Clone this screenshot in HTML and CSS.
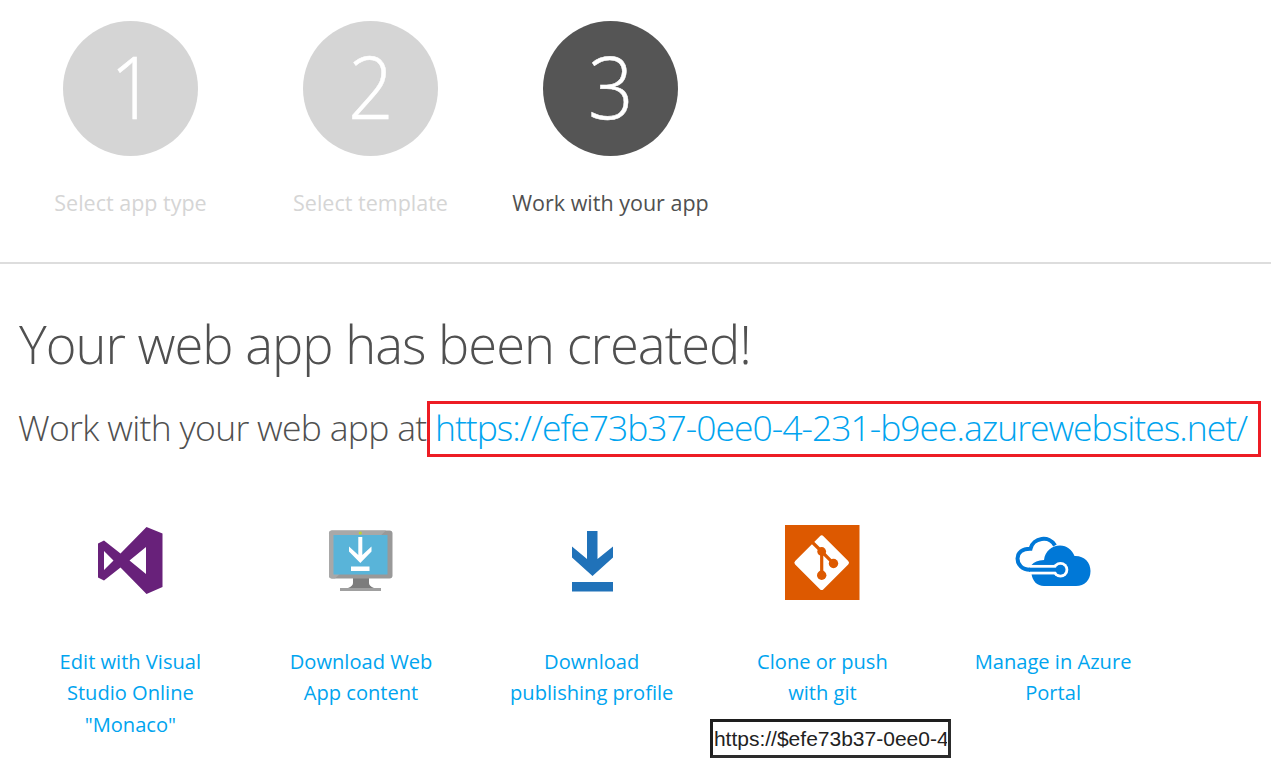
FILE: index.html
```html
<!DOCTYPE html>
<html lang="en">
<head>
<meta charset="utf-8">
<title>Your web app has been created!</title>
<link rel="stylesheet" href="styles.css">
</head>
<body>
<header class="steps">
  <div class="step"><div class="step-number step-one"><span class="digit">1</span></div><div class="step-label">Select app type</div></div>
  <div class="step"><div class="step-number"><span class="digit">2</span></div><div class="step-label">Select template</div></div>
  <div class="step step-active"><div class="step-number"><span class="digit">3</span></div><div class="step-label">Work with your app</div></div>
</header>
<main>
  <h1 class="title">Your web app has been created!</h1>
  <div class="site"><span class="site-intro">Work with your web app at</span><div class="site-box"><a class="site-link">https://efe73b37-0ee0-4-231-b9ee.azurewebsites.net/</a></div></div>
  <section class="actions">
    <div class="action">
      <svg class="icon" viewBox="0 0 100 90"><path fill="#68217a" fill-rule="evenodd" d="M66.5 12 82.500 18.500V72L66.500 79 40.500 52.500 24 65.500 18 62.500V28.500L24 25.500 40.500 38.500ZM66 32 49.500 45.500 66 59ZM24 36V55L33.500 45.500Z"/></svg>
      <div class="action-label">Edit with Visual<br>Studio Online<br>"Monaco"</div>
    </div>
    <div class="action">
      <svg class="icon" viewBox="-4 0 100 90"><path fill="#7c7c7c" d="M38 62H54V68Q54 71 59 73H33Q38 71 38 68Z"/><path fill="#a0a0a0" d="M25 73H66V76H25Z"/><rect x="14" y="15.500" width="63.500" height="48" rx="3" fill="#999"/><path fill="#a8a8a8" d="M17 15.500H71L20 63.500H17Q14 63.500 14 60.500V18.500Q14 15.500 17 15.500Z"/><rect x="18.500" y="20" width="54" height="39.500" fill="#59b4d9"/><circle cx="45.300" cy="18" r="1.600" fill="#b8d432"/><path fill="#fff" d="M43.300 22H47.300V40L56.500 31.500V36.500L45.300 48 34 36.500V31.500L43.300 40ZM36 51.500H54.500V56H36Z"/></svg>
      <div class="action-label">Download Web<br>App content</div>
    </div>
    <div class="action">
      <svg class="icon" viewBox="0 0 100 90"><path fill="#2072b9" d="M45 16H55.500V44L71 31.500V42.500L50.500 61 30 42.500V31.500L45 44ZM30 67H71V76.500H30Z"/></svg>
      <div class="action-label">Download<br>publishing profile</div>
    </div>
    <div class="action">
      <svg class="icon" viewBox="0 0 100 90"><path fill="#dd5900" d="M13 10H87.500V85H13Z"/><rect x="29.700" y="27.700" width="40" height="40" rx="2.500" fill="#fff" transform="rotate(45 49.700 47.700)"/><path fill="none" stroke="#dd5900" stroke-width="3.200" d="M37.500 24.500 49.700 36.500 61.500 48.500M49.700 36V60"/><g fill="#dd5900"><circle cx="49.700" cy="36.500" r="4.400"/><circle cx="61.500" cy="48.500" r="4.700"/><circle cx="49.700" cy="60.300" r="4.700"/></g></svg>
      <div class="action-label">Clone or push<br>with git</div>
      <input class="git-url" type="text" value="https://$efe73b37-0ee0-4231" readonly>
    </div>
    <div class="action">
      <svg class="icon" viewBox="0 0 100 90"><path fill="none" stroke="#0078d7" stroke-width="4" d="M27 54.700C19 54.700 14.500 49.500 14.500 43.500C14.500 37.500 19.500 33.500 27.500 33.700C30 22.500 46.500 20 52 30.500"/><path fill="#0078d7" d="M41 71C34 71 29.500 66 28.500 59V50Q32 45.300 41 45C42 36 49 30.500 57 30.500C64 30.500 69 35 71.500 41C81 40.500 87.500 47 87.500 56C87.500 65 81.500 71 73 71Z"/><path fill="none" stroke="#fff" stroke-width="9.500" d="M27 54.700H55"/><circle cx="57.500" cy="54.700" r="7.800" fill="#fff"/><path fill="none" stroke="#0078d7" stroke-width="4" d="M26 54.700H56"/><circle cx="57.500" cy="54.700" r="5" fill="#0078d7"/></svg>
      <div class="action-label">Manage in Azure<br>Portal</div>
    </div>
  </section>
</main>
</body>
</html>
```
FILE: styles.css
```css
* { box-sizing: border-box; }
body { margin: 0; background: #fff; color: #505050; font-family: "Open Sans", "Noto Sans", sans-serif; height: 778px; overflow: hidden; }
.steps { display: flex; height: 264px; padding: 21px 0 0 10.500px; border-bottom: 2px solid #ddd; }
.step { width: 240px; display: flex; flex-direction: column; align-items: center; color: #d5d5d5; }
.step-number { width: 135px; height: 135px; border-radius: 50%; background: #d5d5d5; color: #fff; font-size: 87px; font-weight: 300; line-height: 129px; text-align: center; }
.step-one { padding-left: 5px; }
.digit { display: inline-block; transform: scaleX(.92); -webkit-text-stroke: .5px #fff; }
.step-label { margin-top: 31px; font-size: 21.500px; line-height: 32px; white-space: nowrap; }
.step-active { color: #505050; }
.step-active .step-number { background: #555; }
.title { margin: 44px 0 0 19px; font-size: 52.500px; font-weight: 300; line-height: 72px; letter-spacing: -1px; white-space: nowrap; }
.site { display: flex; align-items: flex-start; margin: 21px 0 0 18px; height: 56px; font-size: 35.500px; font-weight: 300; line-height: 48px; white-space: nowrap; }
.site-intro { width: 409px; padding-top: 2px; letter-spacing: -.7px; }
.site-box { width: 834px; height: 56px; padding-left: 5px; border: 3px solid #ed1c24; line-height: 46px; }
.site-link { color: #00a4ef; letter-spacing: -1px; }
.actions { display: flex; padding: 58px 0 0 15px; }
.action { width: 230.700px; display: flex; flex-direction: column; align-items: center; }
.icon { width: 100px; height: 90px; display: block; }
.action-label { margin-top: 41px; color: #00a4ef; font-size: 20.100px; line-height: 31.400px; text-align: center; white-space: nowrap; }
.git-url { width: 241px; height: 39px; margin: 10px 0 0 16px; padding: 1px 1px 0; border: 3px solid; border-color: #1e1e1e #2c2c2c #2c2c2c #1e1e1e; background: #fff; color: #222; font: 21px "Liberation Sans", Arial, sans-serif; }
```
